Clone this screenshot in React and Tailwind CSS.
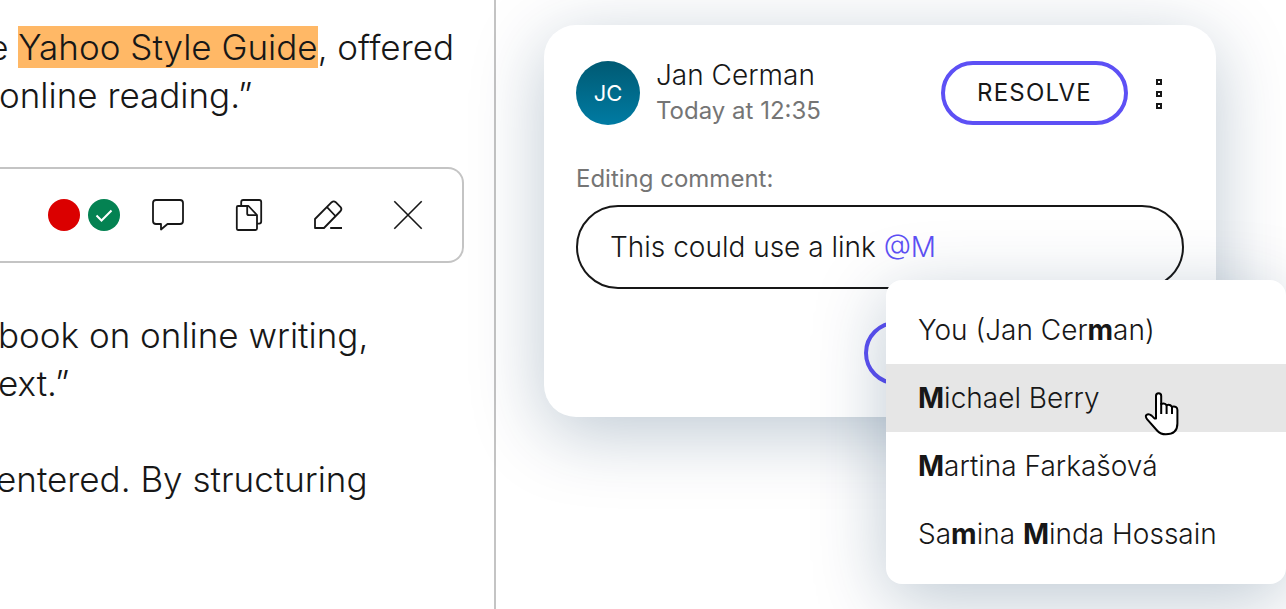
import { useState } from 'react'

const PEOPLE = [
  { id: 1, parts: ['You (Jan Cer', { hit: 'm' }, 'an)'] },
  { id: 2, parts: [{ hit: 'M' }, 'ichael Berry'] },
  { id: 3, parts: [{ hit: 'M' }, 'artina Farkašová'] },
  { id: 4, parts: ['Sa', { hit: 'm' }, 'ina ', { hit: 'M' }, 'inda Hossain'] },
]

function ToolButton({ label, children }) {
  return (
    <button type="button" aria-label={label} className="flex size-20 items-center justify-center">
      <svg
        viewBox="0 0 32 32"
        className="size-8"
        fill="none"
        stroke="currentColor"
        strokeWidth="1.8"
        strokeLinejoin="round"
      >
        {children}
      </svg>
    </button>
  )
}

function Toolbar() {
  return (
    <div className="mr-[30px] flex h-24 items-center justify-end rounded-r-2xl border-2 border-l-0 border-[#c4c4c4] pr-[14px]">
      <div className="flex gap-2 pr-2">
        <button type="button" aria-label="Red marker" className="size-8 rounded-full bg-[#db0000]" />
        <button
          type="button"
          aria-label="Green marker"
          className="flex size-8 items-center justify-center rounded-full bg-[#048252]"
        >
          <svg viewBox="0 0 32 32" className="size-8" fill="none" stroke="white" strokeWidth="2">
            <path d="M8.5 16.5 L13.5 21.5 L23.5 11.5" />
          </svg>
        </button>
      </div>
      <ToolButton label="Comment">
        <path d="M4 1 H28 Q31 1 31 4 V22 Q31 25 28 25 H15.5 L9 30.5 V25 H4 Q1 25 1 22 V4 Q1 1 4 1 Z" />
      </ToolButton>
      <ToolButton label="Copy">
        <path d="M9.2 7 V3 Q9.2 1 11.2 1 H27.2 Q29.2 1 29.2 3 V22.6 Q29.2 24.6 27.2 24.6 H25.2" />
        <path d="M6 7 H16.5 L25 16 V29.5 Q25 31 23.5 31 H6 Q4.8 31 4.8 29.5 V8.2 Q4.8 7 6 7 Z" />
        <path d="M15.2 7 V14.5 Q15.2 16.2 17 16.2 H25" />
      </ToolButton>
      <ToolButton label="Erase">
        <path d="M3 29 V20 L19.7 3.2 Q21.7 1.6 23.7 3.2 L28.6 8.2 Q30.2 10 28.6 12 L12 29 Z" />
        <path d="M15 8.2 L23.4 17 M18.2 29 H30" />
      </ToolButton>
      <ToolButton label="Close">
        <path d="M2.3 2.3 L29.7 29.7 M29.7 2.3 L2.3 29.7" strokeWidth="1.6" />
      </ToolButton>
    </div>
  )
}

function Article() {
  return (
    <main className="min-w-0 flex-1 border-r-2 border-[#c4c4c4] pt-[23px] text-[35px]/[48px] whitespace-nowrap">
      <div className="flex justify-end pr-10">
        <p>
          e <mark className="bg-[#ffb866] text-inherit">Yahoo Style Guide</mark>, offered
        </p>
      </div>
      <p className="-ml-px">online reading.”</p>
      <div className="py-12">
        <Toolbar />
      </div>
      <p className="-ml-0.5">
        book on online writing,
        <br />
        ext.”
      </p>
      <p className="mt-12 -ml-1">entered. By structuring</p>
    </main>
  )
}

function MentionMenu({ activeId }) {
  return (
    <ul
      role="listbox"
      aria-label="People"
      className="absolute top-[75px] left-[310px] z-10 w-[400px] rounded-2xl bg-white py-4 shadow-[0_16px_72px_rgba(0,45,85,0.26)]"
    >
      {PEOPLE.map((person) => (
        <li
          key={person.id}
          role="option"
          aria-selected={person.id === activeId}
          className={
            person.id === activeId
              ? 'relative bg-[#e6e6e6] px-8 text-[28px]/[68px]'
              : 'px-8 text-[28px]/[68px]'
          }
        >
          {person.parts.map((part, i) =>
            part.hit ? (
              <b key={i} className="font-bold">
                {part.hit}
              </b>
            ) : (
              part
            ),
          )}
          {person.id === activeId && <HandPointer />}
        </li>
      ))}
    </ul>
  )
}

function HandPointer() {
  return (
    <svg
      viewBox="0 0 36 44"
      className="absolute top-7 left-[258px] z-10 h-11 w-9"
      fill="white"
      stroke="black"
      strokeWidth="2"
      strokeLinejoin="round"
    >
      <path d="M12 26.5 V4 Q12 1.3 14.6 1.3 Q17.2 1.3 17.2 4 V12 Q20.5 10.6 22.6 13.2 Q26 12 28 14.8 Q33.4 13.8 33.4 18 V31.5 Q33.4 42.3 21.8 42.3 Q16.5 42.3 13.5 39 L3.2 27.4 Q1 24.5 2.4 23 Q4.6 21.2 7.6 23.6 L10.4 26.4 Z" />
      <path d="M17.2 11 V22 M22.6 12.5 V22 M28 14 V22" />
    </svg>
  )
}

function CommentField() {
  const [text, setText] = useState('This could use a link @M')
  const at = text.lastIndexOf('@')
  const split = at < 0 ? text.length : at

  return (
    <div className="relative">
      {/* the layer below colours the mention, the input on top takes the typing */}
      <div
        aria-hidden="true"
        className="flex h-21 items-center overflow-hidden rounded-full border-2 border-[#171717] px-8 text-[28px] whitespace-pre"
      >
        {text.slice(0, split)}
        <span className="text-[#5d50f5]">{text.slice(split)}</span>
      </div>
      <input
        id="comment"
        value={text}
        onChange={(e) => setText(e.target.value)}
        className="absolute inset-0 rounded-full border-2 border-transparent bg-transparent px-8 text-[28px] text-transparent caret-[#171717] outline-none"
      />
      <MentionMenu activeId={2} />
    </div>
  )
}

function CommentCard() {
  return (
    <section className="rounded-[32px] bg-white p-8 shadow-[0_16px_72px_rgba(0,45,85,0.26)]">
      <header className="flex items-center">
        <div className="flex size-16 items-center justify-center rounded-full bg-linear-to-b from-[#005a73] to-[#007ba3] text-[22px] font-normal text-white">
          JC
        </div>
        <div className="ml-4 flex-1">
          <h2 className="text-[28px]/[36px]">Jan Cerman</h2>
          <p className="text-[24px]/[36px] font-normal text-[#757575]">Today at 12:35</p>
        </div>
        <button
          type="button"
          className="h-16 rounded-full border-4 border-[#5d50f5] px-8 text-[24px] font-normal tracking-wider"
        >
          RESOLVE
        </button>
        <button type="button" aria-label="More" className="ml-[6px] flex h-16 w-[50px] items-center justify-center">
          <svg viewBox="0 0 6 32" className="h-8 w-[6px]" fill="none" stroke="currentColor" strokeWidth="2">
            <path d="M1 3 H5 V7 H1 Z M1 15 H5 V19 H1 Z M1 27 H5 V31 H1 Z" />
          </svg>
        </button>
      </header>
      <label htmlFor="comment" className="mt-8 mb-2 block text-[24px]/[36px] font-normal text-[#757575]">
        Editing comment:
      </label>
      <CommentField />
      <div className="mt-8 flex justify-end gap-4">
        <button type="button" aria-label="Cancel" className="h-16 w-38 rounded-full border-4 border-[#5d50f5]" />
        <button type="button" aria-label="Save" className="h-16 w-38 rounded-full bg-[#5d50f5]" />
      </div>
    </section>
  )
}

export default function App() {
  return (
    <div className="flex min-h-screen overflow-hidden bg-white font-['Inter',sans-serif] font-light text-[#171717]">
      <Article />
      <aside className="w-[790px] shrink-0 pt-[25px] pr-[70px] pl-12">
        <CommentCard />
      </aside>
    </div>
  )
}
